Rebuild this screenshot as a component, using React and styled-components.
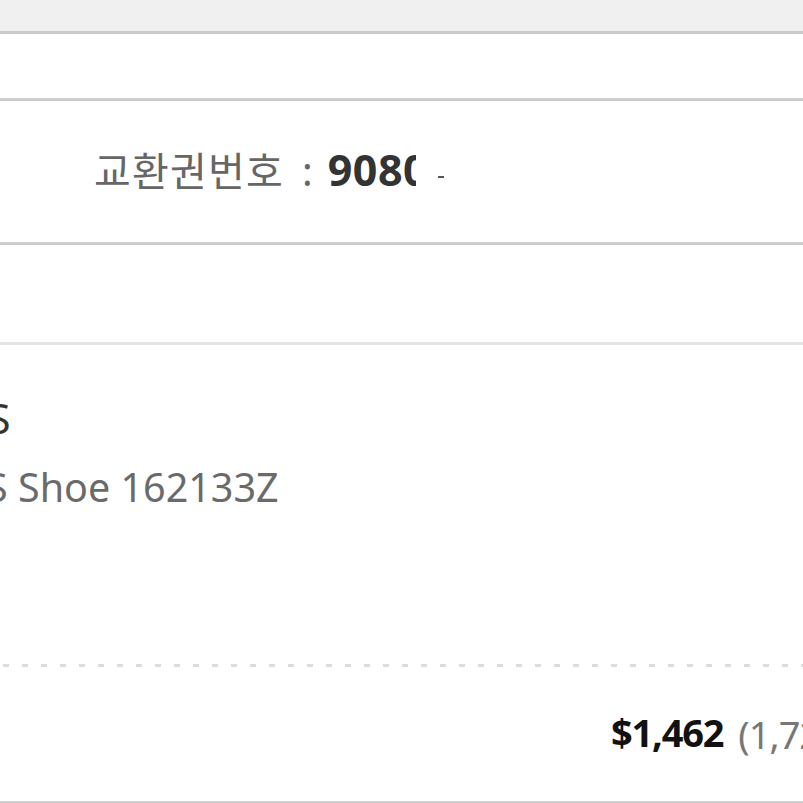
import React from 'react';
import styled, { createGlobalStyle } from 'styled-components';

const Global = createGlobalStyle`
  html, body {
    margin: 0;
    padding: 0;
    background: #fff;
    overflow: hidden;
  }
  body {
    font-family: "Noto Sans", "Noto Sans CJK KR", sans-serif;
  }
`;

const Page = styled.div`
  width: 803px;
  height: 803px;
  overflow: hidden;
  display: flex;
  flex-direction: column;
`;

const TopBar = styled.div`
  height: 31px;
  background: #f0f0f0;
  border-bottom: 3px solid #c9c9c9;
`;

const Band = styled.div`
  height: ${p => p.h}px;
  border-bottom: 3px solid ${p => p.line || '#cbcbcb'};
  display: flex;
  align-items: center;
`;

const Ticket = styled.div`
  padding-left: 94px;
  padding-bottom: 4px;
  font-size: 40px;
  color: #666;
  white-space: nowrap;
  display: flex;
  align-items: baseline;
`;

const Label = styled.span`
  font-family: "Noto Sans CJK KR", sans-serif;
  letter-spacing: 1.2px;
`;

const Colon = styled.span`
  margin: 0 15px 0 18px;
`;

const Code = styled.span`
  font-weight: 700;
  color: #333;
  font-size: 43px;
  letter-spacing: 0.5px;
`;

const Cut = styled.span`
  display: inline-block;
  width: 13px;
  overflow: hidden;
  vertical-align: bottom;
`;

const Dash = styled.span`
  display: inline-block;
  width: 6px;
  height: 2px;
  background: #555;
  margin-left: 22px;
  transform: translateY(-8px);
`;

const Product = styled.div`
  flex: 1;
  display: flex;
  flex-direction: column;
  border-bottom: 2px solid #cfcfcf;
`;

const Names = styled.div`
  height: 319px;
  padding-top: 48px;
  box-sizing: border-box;
  overflow: hidden;
`;

const Brand = styled.div`
  font-size: 41px;
  color: #333;
  margin-left: -12px;
  line-height: 50px;
  white-space: nowrap;
`;

const Model = styled.div`
  font-size: 39.5px;
  color: #6a6a6a;
  margin-left: -14px;
  margin-top: 19px;
  line-height: 50px;
  white-space: nowrap;
`;

const Dashed = styled.div`
  height: 3px;
  background: repeating-linear-gradient(to right, transparent 0 3px, #dcdcdc 3px 9px, transparent 9px 19px);
`;

const PriceRow = styled.div`
  flex: 1;
  display: flex;
  align-items: center;
  padding-left: 611px;
  padding-bottom: 4px;
  white-space: nowrap;
`;

const Price = styled.span`
  font-size: 38px;
  font-weight: 700;
  color: #111;
  letter-spacing: -1.2px;
`;

const Won = styled.span`
  font-size: 38px;
  color: #777;
  margin-left: 15px;
  letter-spacing: -1px;
`;

export default function App() {
  return (
    <Page>
      <Global />
      <TopBar />
      <Band h={64} />
      <Band h={141}>
        <Ticket>
          <Label>교환권번호</Label>
          <Colon>:</Colon>
          <Code>908<Cut>0</Cut></Code>
          <Dash />
        </Ticket>
      </Band>
      <Band h={97} line="#e3e3e3" />
      <Product>
        <Names>
          <Brand>S</Brand>
          <Model>S Shoe 162133Z</Model>
        </Names>
        <Dashed />
        <PriceRow>
          <Price>$1,462</Price>
          <Won>(1,720,000원)</Won>
        </PriceRow>
      </Product>
    </Page>
  );
}
